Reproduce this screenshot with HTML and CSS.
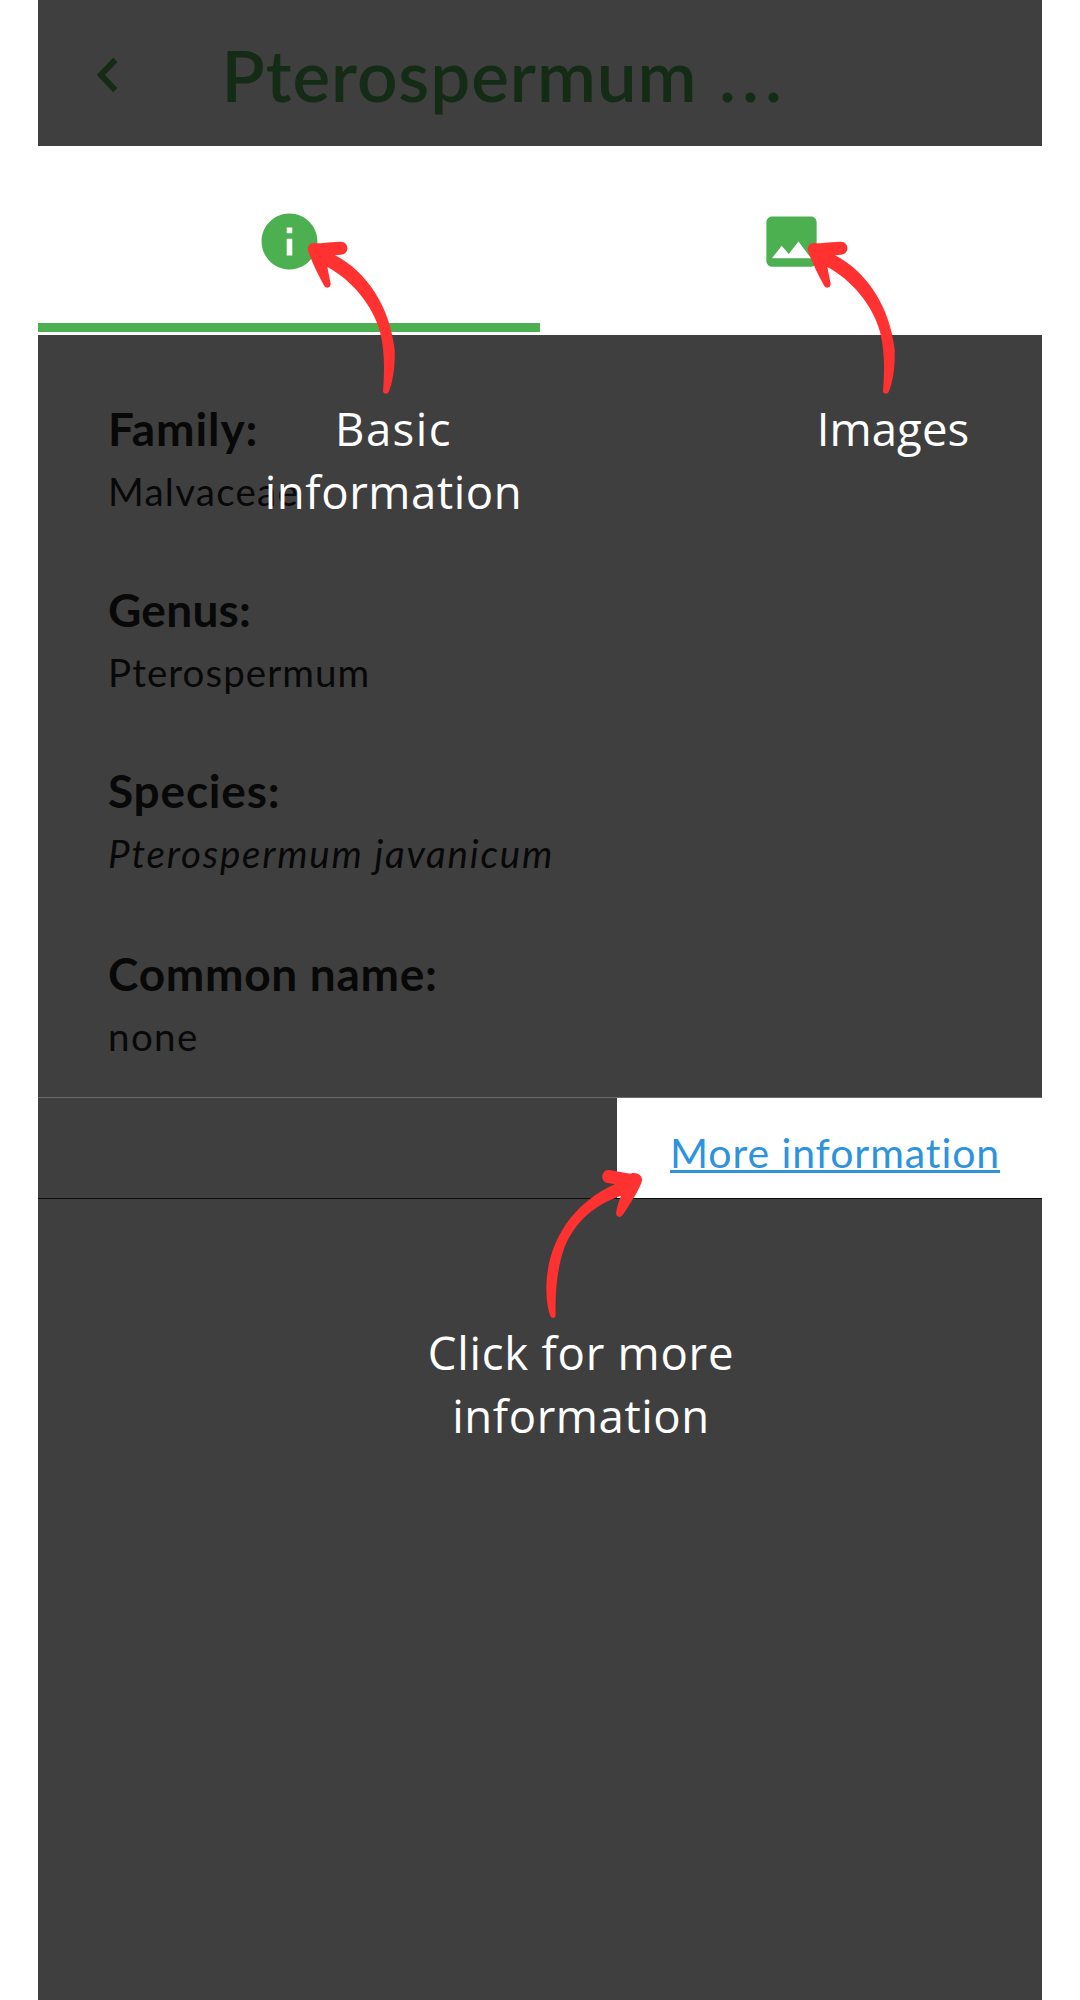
FILE: index.html
```
<!DOCTYPE html>
<html lang="en">
<head>
<meta charset="utf-8">
<title>Species details</title>
<link rel="stylesheet" href="styles.css">
</head>
<body>
<svg class="defs" width="0" height="0" aria-hidden="true">
  <symbol id="arrow-left" viewBox="0 0 540 660">
    <path d="M204 182C202 170 208 159 224 159C236 161 250 158 302 155C328 155 330 194 302 194L285 196C380 245 450 350 464 480C466 525 459 575 446 606C442 614 430 613 429 603C434 540 434 480 420 425C398 345 335 270 262 231L272 281C273 293 259 297 253 288C234 254 218 222 204 182Z"/>
  </symbol>
</svg>
<main class="screen">
  <header class="appbar">
    <svg class="back" viewBox="0 0 22 36"><path d="M17.2 .8L21.400 5L9 18L21.400 31L17.200 35.200L.8 18Z"/></svg>
    <h1 class="title">Pterospermum <span class="dots">...</span></h1>
  </header>
  <nav class="tabs">
    <div class="tab active">
      <svg class="tab-icon" viewBox="0 0 24 24"><path d="M12 2C6.48 2 2 6.48 2 12s4.48 10 10 10 10-4.48 10-10S17.52 2 12 2zm1 15h-2v-6h2v6zm0-8h-2V7h2v2z"/></svg>
    </div>
    <div class="tab">
      <svg class="tab-icon" viewBox="0 0 24 24"><path d="M21 19V5c0-1.1-.9-2-2-2H5c-1.100 0-2 .9-2 2v14c0 1.100.9 2 2 2h14c1.100 0 2-.9 2-2zM8.500 13.500l2.500 3.010L14.500 12l4.500 6H5l3.500-4.500z"/></svg>
    </div>
  </nav>
  <dl class="details">
    <div class="entry"><dt class="family">Family:</dt><dd class="family-value">Malvaceae</dd></div>
    <div class="entry"><dt class="genus">Genus:</dt><dd>Pterospermum</dd></div>
    <div class="entry"><dt class="species">Species:</dt><dd class="latin">Pterospermum javanicum</dd></div>
    <div class="entry"><dt class="common">Common name:</dt><dd class="none">none</dd></div>
  </dl>
  <div class="more"><a class="more-link">More information</a></div>
</main>

<svg class="arrow arrow-info"><use href="#arrow-left"/></svg>
<svg class="arrow arrow-images"><use href="#arrow-left"/></svg>
<svg class="arrow arrow-more" viewBox="0 0 330 510"><path d="M291 62C293 48 280 37 262 39C255 43 245 39 192 30C168 29 164 66 188 69L210 73C90 125 5 240 4 385C4 420 9 450 16 468C20 477 32 475 32 465C30 400 36 320 60 258C92 183 150 133 228 107C220 128 215 145 213 160C213 171 226 175 233 165C254 133 283 90 291 62Z"/></svg>
<p class="note note-info"><span class="basic">Basic</span><br>information</p>
<p class="note note-images">Images</p>
<p class="note note-more"><span class="click">Click for more</span><br>information</p>
</body>
</html>
```
FILE: styles.css
```
body {
  margin: 0;
  background: #fff;
  font-family: Lato, sans-serif;
  font-variant-ligatures: none;
  position: relative;
  height: 2000px;
  overflow: hidden;
}
.defs { position: absolute; }
.screen {
  box-sizing: border-box;
  width: 1004px;
  height: 2000px;
  margin: 0 auto;
  background: #3f3f3f;
}
.appbar {
  display: flex;
  align-items: center;
  height: 146px;
  box-sizing: border-box;
  padding: 3px 0 0 58px;
}
.back { width: 22px; height: 36px; fill: #142b15; }
.title {
  margin: 0 0 0 103.600px;
  font-size: 71px;
  font-weight: 600;
  letter-spacing: .9px;
  line-height: 86px;
  color: #142b15;
  white-space: nowrap;
}
.dots { letter-spacing: 6.200px; margin-left: 3px; }
.tabs {
  display: flex;
  height: 188.500px;
  background: #fff;
}
.tab {
  flex: 1;
  box-sizing: border-box;
  display: flex;
  justify-content: center;
  padding-top: 62px;
  margin-bottom: 3px;
}
.tab.active { border-bottom: 9px solid #4caf50; }
.tab-icon { width: 67px; height: 67px; fill: #4caf50; }
.details {
  margin: 0;
  box-sizing: border-box;
  height: 763.500px;
  padding: 61px 0 0 70px;
  color: #080808;
  border-bottom: 1px solid #6c6c6c;
}
.entry { margin-bottom: 56px; }
.entry:nth-child(3) { margin-bottom: 58px; }
dt { font-size: 46px; font-weight: 700; line-height: 66px; }
dd { margin: 0; font-size: 38.500px; line-height: 59px; letter-spacing: 1.050px; }
.family { letter-spacing: .9px; }
.genus { letter-spacing: .25px; }
.species { letter-spacing: .8px; }
.common { letter-spacing: .7px; }
.family-value { letter-spacing: 1.250px; }
.latin { font-style: italic; letter-spacing: 1.800px; }
.none { letter-spacing: 1.400px; }
.more {
  display: flex;
  justify-content: flex-end;
  height: 101px;
  box-sizing: border-box;
  border-bottom: 1px solid #0c0c0c;
}
.more-link {
  width: 425px;
  height: 100px;
  box-sizing: border-box;
  padding: 30px 0 0 53px;
  background: #fff;
  color: #2d93df;
  font-size: 41px;
  line-height: 50px;
  letter-spacing: .9px;
  text-decoration: underline;
  text-decoration-thickness: 2.500px;
  text-underline-offset: 2px;
  text-decoration-skip-ink: none;
  white-space: nowrap;
}
.arrow { position: absolute; fill: #ff3131; }
.arrow-info { left: 240px; top: 190px; width: 180px; height: 220px; }
.arrow-images { left: 740px; top: 190px; width: 180px; height: 220px; }
.arrow-more { left: 545px; top: 1160px; width: 110px; height: 170px; }
.note {
  position: absolute;
  margin: 0;
  width: 400px;
  font: 45.500px/63px "Open Sans", sans-serif;
  letter-spacing: .6px;
  text-align: center;
  color: #fff;
}
.note-info { left: 193.500px; top: 396.500px; }
.note-images { left: 693px; top: 396.500px; letter-spacing: .1px; }
.note-more { left: 381px; top: 1320.500px; }
.basic { letter-spacing: 1.450px; }
.click { letter-spacing: .75px; }
```
